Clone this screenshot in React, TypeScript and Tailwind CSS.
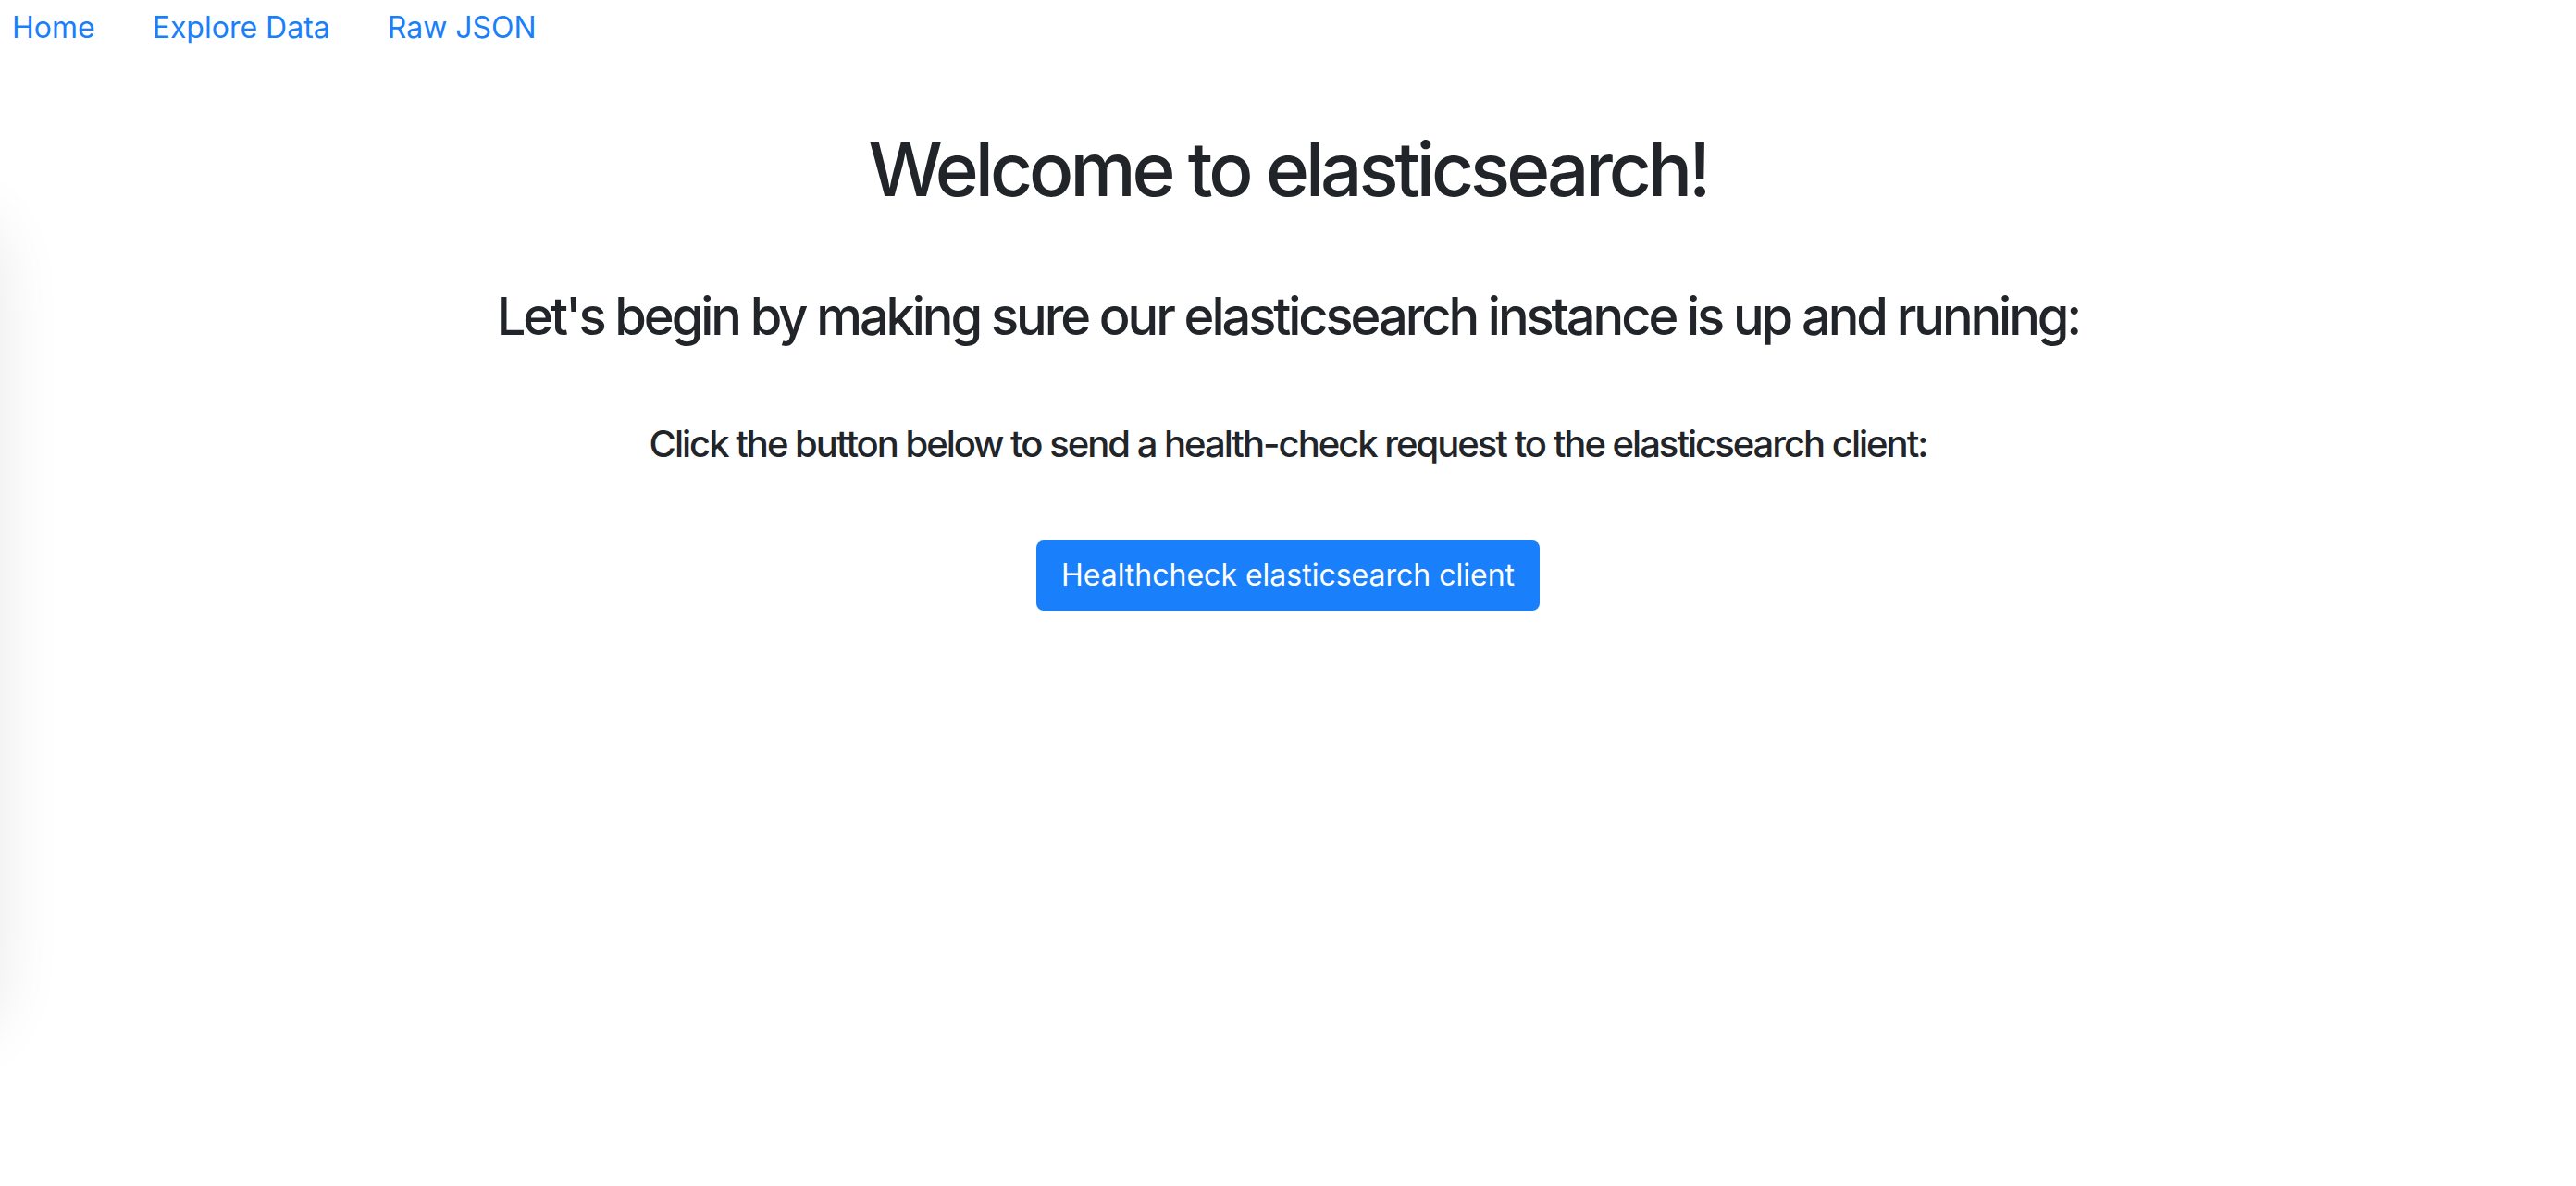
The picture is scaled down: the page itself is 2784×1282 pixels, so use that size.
const links = ["Home", "Explore Data", "Raw JSON"];

export default function App() {
  return (
    <div className="relative h-[1282px] w-full overflow-hidden bg-white font-[Inter,sans-serif] text-[#212529]">
      {/* faint shadow of an off-screen drawer */}
      <div className="absolute left-[-120px] top-[230px] h-[890px] w-[120px] rounded-[60px] bg-white shadow-[0_0_70px_rgba(0,0,0,0.09)]" />

      <nav className="flex gap-[62px] pl-[13px] pt-[6px]">
        {links.map((link) => (
          <a key={link} href="#" className="text-[32px] leading-[48px] text-[#1a7ffb]">
            {link}
          </a>
        ))}
      </nav>

      <main className="relative flex flex-col items-center text-center">
        <h1 className="mt-[81px] text-[80px] font-medium leading-[96px] tracking-[-0.05em]">
          Welcome to elasticsearch!
        </h1>
        <h3 className="mt-[78px] text-[56px] font-medium leading-[67px] tracking-[-0.055em]">
          Let's begin by making sure our elasticsearch instance is up and running:
        </h3>
        <h5 className="mt-[80px] text-[40px] font-medium leading-[48px] tracking-[-0.05em]">
          Click the button below to send a health-check request to the elasticsearch client:
        </h5>
        <button className="mt-[80px] h-[76px] rounded-[8px] bg-[#1a7ffb] px-[27px] text-[32px] leading-[48px] text-white">
          Healthcheck elasticsearch client
        </button>
      </main>
    </div>
  );
}
